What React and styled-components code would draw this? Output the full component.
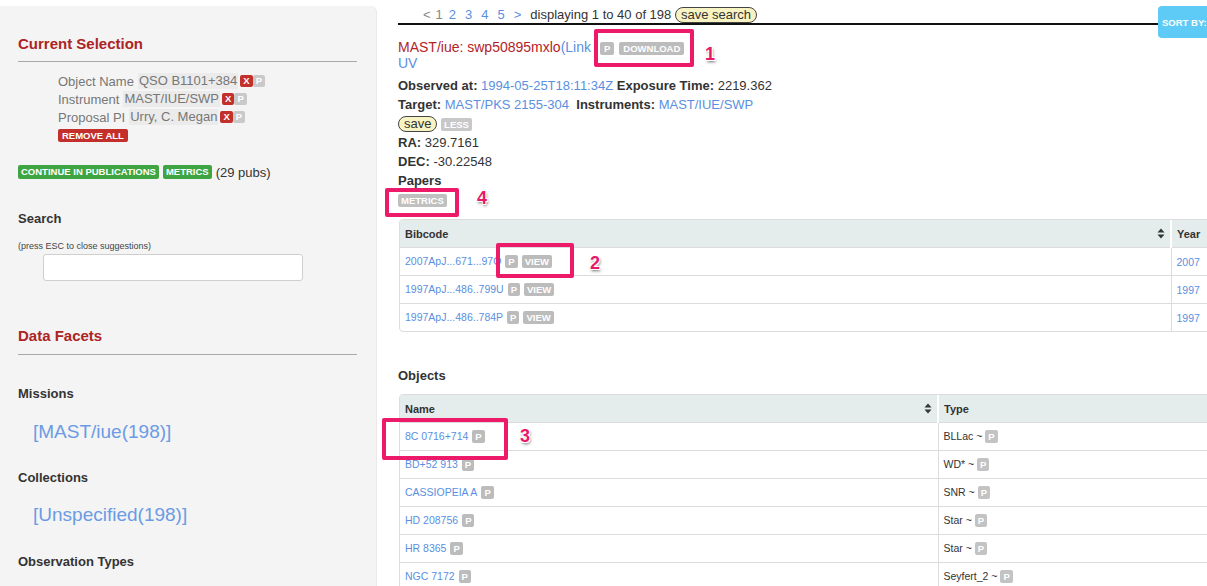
import React from 'react';
import styled, { createGlobalStyle } from 'styled-components';

const GlobalStyle = createGlobalStyle`
    html, body {
        margin: 0;
        padding: 0;
        background: #fff;
        overflow: hidden;
    }
    body {
        font-family: "Liberation Sans", Arial, sans-serif;
        color: #333;
    }
`;

const Page = styled.div`
    display: flex;
    align-items: flex-start;
    width: 1207px;
    height: 586px;
    overflow: hidden;
`;

/* ---------- sidebar ---------- */

const Sidebar = styled.aside`
    flex: 0 0 377px;
    box-sizing: border-box;
    margin-top: 6px;
    height: 600px;
    padding: 28px 19px 0 18px;
    background: #f4f4f4;
    border-right: 1px solid #e9e9e9;
    border-top-right-radius: 6px;
`;

const SectionTitle = styled.h2`
    margin: ${p => p.$top || 0}px 0 0;
    font-size: 15px;
    line-height: 20px;
    font-weight: 700;
    color: #ad2424;
`;

const Rule = styled.hr`
    margin: ${p => p.$top || 7}px 0 0;
    border: 0;
    border-top: 1px solid #a8a8a8;
`;

const FilterList = styled.div`
    margin: 10px 0 0 40px;
`;

const FilterRow = styled.div`
    display: flex;
    align-items: center;
    height: 18px;
    font-size: 13px;
    color: #777;
    white-space: nowrap;
`;

const FilterValue = styled.span`
    margin-left: 4px;
    padding: 0 1px;
    background: #ebebeb;
    line-height: 16px;
    margin-right: 2px;
`;

const Badge = styled.span`
    display: inline-block;
    padding: 0 ${p => p.$pad || 3}px;
    height: ${p => p.$h || 13}px;
    line-height: ${p => p.$h || 13}px;
    font-size: 9.5px;
    font-weight: 700;
    color: #fff;
    background: ${p => p.$bg || '#bcbcbc'};
    border-radius: 2px;
    text-transform: uppercase;
    vertical-align: middle;
    margin-left: ${p => p.$gap || 0}px;
`;

const ActionRow = styled.div`
    display: flex;
    align-items: center;
    gap: 4px;
    margin-top: ${p => p.$top || 0}px;
    height: 18px;
    font-size: 13px;
    color: #333;
`;

const Label = styled.div`
    margin-top: ${p => p.$top || 0}px;
    font-size: 13px;
    line-height: 18px;
    font-weight: 700;
    color: #333;
`;

const Hint = styled.div`
    margin-top: 11px;
    font-size: 9px;
    line-height: 14px;
    color: #444;
`;

const SearchInput = styled.input`
    display: block;
    box-sizing: border-box;
    margin: 1px 0 0 25px;
    width: 260px;
    height: 27px;
    border: 1px solid #cfcfcf;
    border-radius: 3px;
    background: #fff;
`;

const FacetLink = styled.a`
    display: block;
    margin: ${p => p.$top || 0}px 0 0 15px;
    font-size: 19px;
    line-height: 24px;
    color: #6b9be4;
    text-decoration: none;
`;

/* ---------- main ---------- */

const Main = styled.main`
    position: relative;
    flex: 1;
    min-width: 0;
    height: 586px;
    overflow: hidden;
    padding: 6px 0 0 21px;
`;

const TopBar = styled.div`
    display: flex;
    align-items: flex-start;
    width: 830px;
    height: 19px;
`;

const Pager = styled.div`
    flex: 0 0 760px;
    box-sizing: border-box;
    height: 19px;
    padding: 1px 0 0 25px;
    border-bottom: 2px solid #111;
    font-size: 13px;
    line-height: 15px;
    color: #333;
    white-space: nowrap;
`;

const PageLink = styled.a`
    color: ${p => (p.$current ? '#888' : '#5a8fdf')};
    margin-right: ${p => p.$gap ?? 9}px;
    text-decoration: none;
`;

const Pill = styled.span`
    display: inline-block;
    padding: 0 5px;
    line-height: 14px;
    border: 1px solid #444;
    border-radius: 9px;
    background: #f8f3c2;
    color: #333;
`;

const SortButton = styled.button`
    flex: 0 0 70px;
    height: 32px;
    padding: 0 0 0 4px;
    border: 0;
    border-radius: 4px;
    background: #5ecbf6;
    color: #fff;
    font-family: inherit;
    font-size: 9.5px;
    font-weight: 700;
    text-align: left;
    white-space: nowrap;
`;

const RecordTitle = styled.div`
    margin-top: 14px;
    font-size: 14px;
    line-height: 16px;
    color: #b3241f;
    white-space: nowrap;
`;

const Link = styled.a`
    color: #5a8fdf;
    text-decoration: none;
`;

const Details = styled.div`
    margin-top: 5px;
    font-size: 13px;
    line-height: 19px;
    color: #333;
`;

const Line = styled.div`
    white-space: nowrap;
    & > b { font-weight: 700; }
`;

const TableBox = styled.div`
    margin-top: ${p => p.$top || 0}px;
    width: 830px;
    margin-left: 1px;
    border: 1px solid #dcdcdc;
    border-radius: 4px;
    overflow: hidden;
`;

const Table = styled.table`
    width: 100%;
    border-collapse: collapse;
    table-layout: fixed;
`;

const HeadCell = styled.th`
    height: 27px;
    padding: 0 5px;
    background: #e5ecec;
    font-size: 11px;
    font-weight: 700;
    color: #333;
    text-align: left;
    border-left: ${p => (p.$divider ? '2px solid #fff' : '0')};
`;

const HeadInner = styled.div`
    display: flex;
    align-items: center;
    justify-content: space-between;
`;

const Cell = styled.td`
    height: 27px;
    padding: 0 5px;
    border-top: 1px solid #dcdcdc;
    border-left: ${p => (p.$divider ? '1px solid #dcdcdc' : '0')};
    font-size: 10.5px;
    color: #333;
    white-space: nowrap;
`;

const CellLink = styled.a`
    color: #5a8fdf;
    text-decoration: none;
    margin-right: 4px;
`;

const Subhead = styled.div`
    margin-top: 35px;
    font-size: 13px;
    line-height: 18px;
    font-weight: 700;
    color: #333;
`;

const Mark = styled.div`
    position: absolute;
    box-sizing: border-box;
    border: 4px solid #ec1a68;
    border-radius: 2px;
`;

const Num = styled.span`
    position: absolute;
    font-size: 18px;
    font-weight: 700;
    line-height: 20px;
    color: #e8196b;
    text-shadow: -1px -1px 0 #fff, 1px -1px 0 #fff, -1px 1px 0 #fff, 1px 1px 0 #fff,
        1px 2px 3px rgba(0, 0, 0, 0.6);
`;

const SortIcon = () => (
    <svg width="8" height="11" viewBox="0 0 8 11">
        <path d="M4 0.5 L7.5 4.5 H0.5 Z" fill="#333" />
        <path d="M4 10.5 L7.5 6.5 H0.5 Z" fill="#333" />
    </svg>
);

const filters = [
    ['Object Name', 'QSO B1101+384'],
    ['Instrument', 'MAST/IUE/SWP'],
    ['Proposal PI', 'Urry, C. Megan'],
];

const papers = [
    ['2007ApJ...671...97O', '2007'],
    ['1997ApJ...486..799U', '1997'],
    ['1997ApJ...486..784P', '1997'],
];

const objects = [
    ['8C 0716+714', 'BLLac'],
    ['BD+52 913', 'WD*'],
    ['CASSIOPEIA A', 'SNR'],
    ['HD 208756', 'Star'],
    ['HR 8365', 'Star'],
    ['NGC 7172', 'Seyfert_2'],
];

const App = () => {
    return (
        <>
            <GlobalStyle />
            <Page>
                <Sidebar>
                    <SectionTitle>Current Selection</SectionTitle>
                    <Rule />
                    <FilterList>
                        {filters.map(([label, value]) => (
                            <FilterRow key={label}>
                                {label}
                                <FilterValue>{value}</FilterValue>
                                <Badge $bg="#c3302c" $h={12}>x</Badge>
                                <Badge $bg="#c9c9c9" $h={12}>p</Badge>
                            </FilterRow>
                        ))}
                        <ActionRow>
                            <Badge $bg="#c3302c" $pad={4}>Remove all</Badge>
                        </ActionRow>
                    </FilterList>
                    <ActionRow $top={19}>
                        <Badge $bg="#3ea542" $h={14}>Continue in publications</Badge>
                        <Badge $bg="#3ea542" $h={14}>Metrics</Badge>
                        <span>(29 pubs)</span>
                    </ActionRow>
                    <Label $top={29}>Search</Label>
                    <Hint>(press ESC to close suggestions)</Hint>
                    <SearchInput type="text" />
                    <SectionTitle $top={45}>Data Facets</SectionTitle>
                    <Rule $top={8} />
                    <Label $top={30}>Missions</Label>
                    <FacetLink $top={17}>[MAST/iue(198)]</FacetLink>
                    <Label $top={25}>Collections</Label>
                    <FacetLink $top={16}>[Unspecified(198)]</FacetLink>
                    <Label $top={26}>Observation Types</Label>
                </Sidebar>

                <Main>
                    <TopBar>
                        <Pager>
                            <PageLink $current $gap={5}>&lt;</PageLink>
                            <PageLink $current $gap={6}>1</PageLink>
                            <PageLink>2</PageLink>
                            <PageLink>3</PageLink>
                            <PageLink>4</PageLink>
                            <PageLink>5</PageLink>
                            <PageLink>&gt;</PageLink>
                            displaying 1 to 40 of 198 <Pill>save search</Pill>
                        </Pager>
                        <SortButton>SORT BY:</SortButton>
                    </TopBar>

                    <RecordTitle>
                        MAST/iue: swp50895mxlo<Link>(Link</Link>
                        <Badge $gap={9} $pad={4}>p</Badge>
                        <Badge $gap={5} $pad={4}>Download</Badge>
                        <br />
                        <Link>UV</Link>
                    </RecordTitle>

                    <Details>
                        <Line>
                            <b>Observed at:</b> <Link>1994-05-25T18:11:34Z</Link> <b>Exposure Time:</b> 2219.362
                        </Line>
                        <Line>
                            <b>Target:</b> <Link>MAST/PKS 2155-304</Link>&nbsp; <b>Instruments:</b>{' '}
                            <Link>MAST/IUE/SWP</Link>
                        </Line>
                        <Line>
                            <Pill>save</Pill> <Badge $bg="#c8c8c8">Less</Badge>
                        </Line>
                        <Line>
                            <b>RA:</b> 329.7161
                        </Line>
                        <Line>
                            <b>DEC:</b> -30.22548
                        </Line>
                        <Line>
                            <b>Papers</b>
                        </Line>
                        <Line>
                            <Badge $bg="#c0c0c0">Metrics</Badge>
                        </Line>
                    </Details>

                    <TableBox $top={10}>
                        <Table>
                            <colgroup>
                                <col style={{ width: '771px' }} />
                                <col />
                            </colgroup>
                            <thead>
                                <tr>
                                    <HeadCell>
                                        <HeadInner>
                                            Bibcode <SortIcon />
                                        </HeadInner>
                                    </HeadCell>
                                    <HeadCell $divider>Year</HeadCell>
                                </tr>
                            </thead>
                            <tbody>
                                {papers.map(([code, year]) => (
                                    <tr key={code}>
                                        <Cell>
                                            <CellLink>{code}</CellLink>
                                            <Badge>p</Badge>
                                            <Badge $gap={4}>View</Badge>
                                        </Cell>
                                        <Cell $divider>
                                            <CellLink>{year}</CellLink>
                                        </Cell>
                                    </tr>
                                ))}
                            </tbody>
                        </Table>
                    </TableBox>

                    <Subhead>Objects</Subhead>

                    <TableBox $top={9}>
                        <Table>
                            <colgroup>
                                <col style={{ width: '538px' }} />
                                <col />
                            </colgroup>
                            <thead>
                                <tr>
                                    <HeadCell>
                                        <HeadInner>
                                            Name <SortIcon />
                                        </HeadInner>
                                    </HeadCell>
                                    <HeadCell $divider>Type</HeadCell>
                                </tr>
                            </thead>
                            <tbody>
                                {objects.map(([name, type]) => (
                                    <tr key={name}>
                                        <Cell>
                                            <CellLink>{name}</CellLink>
                                            <Badge>p</Badge>
                                        </Cell>
                                        <Cell $divider>
                                            {type} ~ <Badge $bg="#c3c3c3">p</Badge>
                                        </Cell>
                                    </tr>
                                ))}
                            </tbody>
                        </Table>
                    </TableBox>

                    <Mark style={{ left: 217, top: 29, width: 100, height: 38 }} />
                    <Num style={{ left: 328, top: 44 }}>1</Num>
                    <Mark style={{ left: 119, top: 243, width: 78, height: 35 }} />
                    <Num style={{ left: 213, top: 253 }}>2</Num>
                    <Mark style={{ left: 5, top: 418, width: 126, height: 42 }} />
                    <Num style={{ left: 143, top: 426 }}>3</Num>
                    <Mark style={{ left: 8, top: 188, width: 74, height: 29 }} />
                    <Num style={{ left: 100, top: 188 }}>4</Num>
                </Main>
            </Page>
        </>
    );
};

export default App;
